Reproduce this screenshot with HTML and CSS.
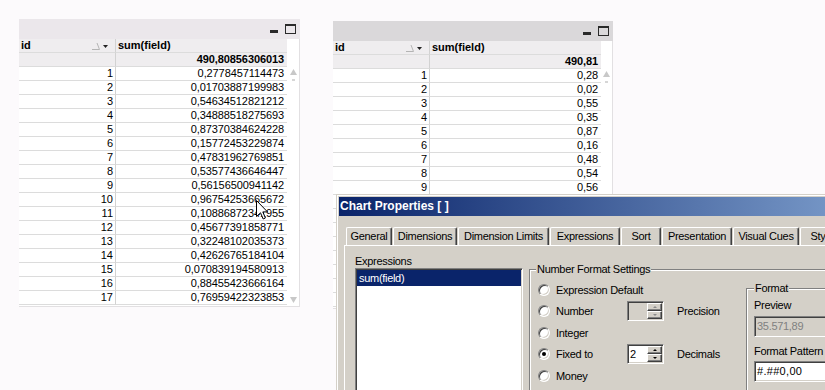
FILE: index.html
```html
<!DOCTYPE html>
<html lang="en">
<head>
<meta charset="utf-8">
<title>Chart Properties</title>
<link rel="stylesheet" href="styles.css">
</head>
<body>

<section class="tableBox leftBox">
    <div class="caption"><span class="btnMin"></span><span class="btnMax"></span></div>
    <div class="tableBody">
        <div class="cells">
            <div class="idCol head">id
                <svg class="sortIcon" width="17" height="8" viewBox="0 0 17 8"><path d="M0 7.5H7.5L5 1" fill="none" stroke="#b4b4b4"/><path d="M11 3h5l-2.5 3z" fill="#222"/></svg>
            </div>
            <div class="sumCol head">sum(field)</div>
            <div class="idCol total"></div>
            <div class="sumCol total">490,80856306013</div>
        </div>
        <div class="scrollBar">
            <svg width="7" height="6" viewBox="0 0 7 6"><path d="M3.5 0L7 6H0z" fill="#c8c8c8"/></svg>
            <span class="scrollDot"></span>
            <svg class="arrowDown" width="7" height="6" viewBox="0 0 7 6"><path d="M0 0H7L3.5 6z" fill="#c8c8c8"/></svg>
        </div>
    </div>
</section>

<section class="tableBox rightBox" data-round="2">
    <div class="caption"><span class="btnMin"></span><span class="btnMax"></span></div>
    <div class="tableBody">
        <div class="cells">
            <div class="idCol head">id
                <svg class="sortIcon" width="17" height="8" viewBox="0 0 17 8"><path d="M0 7.5H7.5L5 1" fill="none" stroke="#b4b4b4"/><path d="M11 3h5l-2.5 3z" fill="#222"/></svg>
            </div>
            <div class="sumCol head">sum(field)</div>
            <div class="idCol total"></div>
            <div class="sumCol total">490,81</div>
        </div>
        <div class="scrollBar">
            <svg width="7" height="6" viewBox="0 0 7 6"><path d="M3.5 0L7 6H0z" fill="#c8c8c8"/></svg>
            <span class="scrollDot"></span>
        </div>
    </div>
</section>

<svg class="cursor" width="12" height="20" viewBox="0 0 12 20"><path d="M0.5 0.5V16.5L4.5 12.8L7.2 19L9.4 18L6.8 11.9H11.5Z" fill="#fff" stroke="#000"/></svg>

<section class="dialog">
    <div class="dialogTitle">Chart Properties [ ]</div>
    <nav class="tabs">
        <span class="tab">General</span>
        <span class="tab">Dimensions</span>
        <span class="tab">Dimension Limits</span>
        <span class="tab">Expressions</span>
        <span class="tab">Sort</span>
        <span class="tab">Presentation</span>
        <span class="tab">Visual Cues</span>
        <span class="tab">Style</span>
    </nav>
    <div class="tabPage">
        <div class="exprColumn">
            <div class="fieldLabel">Expressions</div>
            <div class="listBox">
                <div class="listItem selected">sum(field)</div>
            </div>
        </div>
        <fieldset class="groupBox numberGroup">
            <legend>Number Format Settings</legend>
            <div class="numberInner">
                <div class="options">
                    <span class="radio"></span><span>Expression Default</span><span></span><span></span>

                    <span class="radio"></span><span>Number</span>
                    <span class="spinner disabled"><span class="spinValue"></span><span class="spinButtons"><span class="spinBtn up"></span><span class="spinBtn down"></span></span></span>
                    <span>Precision</span>

                    <span class="radio"></span><span>Integer</span><span></span><span></span>

                    <span class="radio checked"></span><span>Fixed to</span>
                    <span class="spinner"><span class="spinValue">2</span><span class="spinButtons"><span class="spinBtn up"></span><span class="spinBtn down"></span></span></span>
                    <span>Decimals</span>

                    <span class="radio"></span><span>Money</span><span></span><span></span>
                </div>
                <fieldset class="groupBox formatGroup">
                    <legend>Format</legend>
                    <div class="formatInner">
                        <div class="fieldLabel">Preview</div>
                        <div class="textBox disabled previewBox">35.571,89</div>
                        <div class="fieldLabel patternLabel">Format Pattern</div>
                        <div class="textBox patternBox">#.##0,00</div>
                    </div>
                </fieldset>
            </div>
        </fieldset>
    </div>
</section>

<template class="rowTemplate">
    <div class="idCol" data-id></div>
    <div class="sumCol" data-sum></div>
</template>

<script>
    let values = ["0,2778457114473", "0,01703887199983", "0,54634512821212", "0,34888518275693",
        "0,87370384624228", "0,15772453229874", "0,47831962769851", "0,53577436646447",
        "0,56156500941142", "0,96754253665672", "0,10886872341955", "0,45677391858771",
        "0,32248102035373", "0,42626765184104", "0,070839194580913", "0,88455423666164",
        "0,76959422323853"];
    document.addEventListener("DOMContentLoaded", showRows);
    function showRows() {
        let temp = document.querySelector(".rowTemplate");
        document.querySelectorAll(".tableBox").forEach(box => {
            let dest = box.querySelector(".cells");
            let round = box.dataset.round;
            values.forEach((value, i) => {
                let clone = temp.cloneNode(true).content;
                let text = value;
                if (round) text = parseFloat(value.replace(",", ".")).toFixed(round).replace(".", ",");
                clone.querySelector("[data-id]").textContent = i + 1;
                clone.querySelector("[data-sum]").textContent = text;
                dest.appendChild(clone); // rows go straight into the grid
            });
        });
    }
</script>
</body>
</html>
```

FILE: styles.css
```css
* {
    margin: 0;
    padding: 0;
    box-sizing: border-box;
}

body {
    position: relative;
    width: 825px;
    height: 390px;
    overflow: hidden;
    background: #fcfafc;
    font-family: "Liberation Sans", Arial, sans-serif;
    font-size: 11px;
    color: #000;
}

/* table objects on the sheet */
.tableBox {
    position: absolute;
    width: 281px;
}
.leftBox {
    left: 19px;
    top: 19px;
}
.rightBox {
    left: 333px;
    top: 21px;
    width: 280px;
}

.caption {
    height: 20px;
    background: #ebe7eb;
    display: flex;
    justify-content: flex-end;
    align-items: flex-start;
    gap: 7px;
    padding: 5px 4px 0 0;
}
.rightBox .caption {
    background: #dad8da;
}
.btnMin {
    width: 8px;
    height: 3px;
    margin-top: 6px;
    background: #2a2a2a;
}
.btnMax {
    width: 11px;
    height: 10px;
    border: 1px solid #2a2a2a;
    border-top-width: 2px;
}

.tableBody {
    display: flex;
    height: 268px;
    background: #fff;
    border-right: 1px solid #e2e0e2;
    border-bottom: 1px solid #e2e0e2;
}
.cells {
    display: grid;
    grid-template-columns: 97px 171px;
    grid-auto-rows: 14px;
    align-content: start;
}
.cells > div {
    border-bottom: 1px solid #dcdcdc;
    line-height: 13px;
    white-space: nowrap;
    overflow: hidden;
}
.idCol {
    border-right: 1px solid #d2d2d2;
    text-align: right;
    padding-right: 2px;
}
.sumCol {
    text-align: right;
    padding-right: 3px;
    letter-spacing: -0.1px;
}
.head {
    background: #efedef;
    font-weight: bold;
    text-align: left;
    padding-left: 2px;
    letter-spacing: 0;
}
.idCol.head {
    display: flex;
    justify-content: space-between;
    align-items: center;
    padding-right: 6px;
}
.total {
    background: #efedef;
    font-weight: bold;
}

.scrollBar {
    width: 12px;
    display: flex;
    flex-direction: column;
    align-items: center;
    padding: 30px 0 3px 0;
}
.scrollDot {
    width: 3px;
    height: 2px;
    margin-top: 4px;
    background: #d6d6d6;
}
.arrowDown {
    margin-top: auto;
}

.cursor {
    position: absolute;
    left: 256px;
    top: 200px;
}

/* dialog */
.dialog {
    position: absolute;
    left: 336px;
    top: 194px;
    width: 664px;
    height: 200px;
    background: #d4d0c8;
    border-top: 1px solid #d4d0c8;
    border-left: 1px solid #d4d0c8;
    box-shadow: inset 1px 1px 0 #fff;
    padding: 2px 0 0 2px;
    letter-spacing: -0.3px;
}
.dialogTitle {
    height: 19px;
    line-height: 19px;
    padding-left: 1px;
    background: linear-gradient(to right, #0a246a 0, #a6caf0 720px);
    color: #fff;
    font-weight: bold;
    font-size: 12px;
    letter-spacing: 0;
}

.tabs {
    display: flex;
    gap: 1px;
    height: 18px;
    margin: 11px 0 0 7px;
}
.tab {
    flex-shrink: 0;
    height: 18px;
    line-height: 17px;
    text-align: center;
    white-space: nowrap;
    overflow: hidden;
    border: 1px solid #fff;
    border-bottom: 0;
    border-right-color: #404040;
    border-radius: 2px 2px 0 0;
    box-shadow: inset -1px 0 0 #808080;
}
.tab:nth-child(1) { width: 46px; }
.tab:nth-child(2) { width: 64px; }
.tab:nth-child(3) { width: 91px; }
.tab:nth-child(4) { width: 70px; }
.tab:nth-child(5) { width: 40px; }
.tab:nth-child(6) { width: 70px; }
.tab:nth-child(7) { width: 66px; }
.tab:nth-child(8) { width: 44px; }

.tabPage {
    display: flex;
    align-items: flex-start;
    height: 200px;
    margin-left: 5px;
    border-top: 1px solid #fff;
    border-left: 1px solid #fff;
    padding: 8px 0 0 10px;
}

.exprColumn {
    width: 168px;
    flex-shrink: 0;
}
.fieldLabel {
    line-height: 14px;
}
.listBox {
    height: 130px;
    background: #fff;
    border: 1px solid;
    border-color: #808080 #fff #fff #808080;
    box-shadow: inset 1px 1px 0 #404040, inset -1px -1px 0 #d4d0c8;
    padding: 1px;
}
.listItem {
    height: 16px;
    line-height: 16px;
    padding-left: 2px;
}
.selected {
    background: #0a246a;
    color: #fff;
}

.groupBox {
    flex-shrink: 0;
    min-width: 0;
    border: 1px solid #808080;
    box-shadow: inset 1px 1px 0 #fff, 1px 1px 0 #fff;
}
.groupBox legend {
    margin-left: 6px;
    padding: 0 1px;
    line-height: 13px;
    background: #d4d0c8;
}
.numberGroup {
    width: 420px;
    height: 140px;
    margin: 9px 0 0 6px;
}
.numberInner {
    display: flex;
    align-items: flex-start;
    padding: 3px 0 0 8px;
}
.options {
    display: grid;
    grid-template-columns: 18px 71px 50px 69px;
    grid-auto-rows: 21.5px;
    align-items: center;
    white-space: nowrap;
}

.radio {
    width: 12px;
    height: 12px;
    border-radius: 50%;
    background: #fff;
    border: 1px solid;
    border-color: #808080 #fff #fff #808080;
    box-shadow: inset 1px 1px 0 #404040, inset -1px -1px 0 #d4d0c8;
    display: flex;
    align-items: center;
    justify-content: center;
}
.radio.checked::after {
    content: "";
    width: 4px;
    height: 4px;
    border-radius: 50%;
    background: #000;
}

.spinner {
    width: 37px;
    height: 20px;
    display: flex;
    background: #fff;
    border: 1px solid;
    border-color: #808080 #fff #fff #808080;
    box-shadow: inset 1px 1px 0 #404040, inset -1px -1px 0 #d4d0c8;
    padding: 1px;
}
.spinner.disabled {
    background: #d4d0c8;
}
.spinValue {
    width: 18px;
    line-height: 16px;
    padding-left: 1px;
}
.spinButtons {
    flex: 1;
    display: flex;
    flex-direction: column;
}
.spinBtn {
    height: 8px;
    background: #d4d0c8;
    border: 1px solid;
    border-color: #fff #404040 #404040 #fff;
    box-shadow: inset -1px -1px 0 #808080;
    display: flex;
    align-items: center;
    justify-content: center;
}
.spinBtn::after {
    content: "";
    border-left: 2px solid transparent;
    border-right: 2px solid transparent;
}
.up::after {
    border-bottom: 2px solid #000;
}
.down::after {
    border-top: 2px solid #000;
}
.disabled .up::after {
    border-bottom-color: #8a8a8a;
}
.disabled .down::after {
    border-top-color: #8a8a8a;
}

.formatGroup {
    width: 120px;
    height: 120px;
    margin-top: 3px;
}
.formatGroup legend {
    margin-left: 7px;
}
.formatInner {
    padding: 3px 0 0 7px;
}
.textBox {
    width: 100px;
    height: 21px;
    background: #fff;
    border: 1px solid;
    border-color: #808080 #fff #fff #808080;
    box-shadow: inset 1px 1px 0 #404040, inset -1px -1px 0 #d4d0c8;
    padding: 1px 0 0 2px;
    line-height: 16px;
}
.textBox.disabled {
    background: #d4d0c8;
    color: #808080;
}
.previewBox {
    margin-top: 4px;
}
.patternLabel {
    margin-top: 7px;
}
.patternBox {
    margin-top: 3px;
    letter-spacing: 0.3px;
}
```
